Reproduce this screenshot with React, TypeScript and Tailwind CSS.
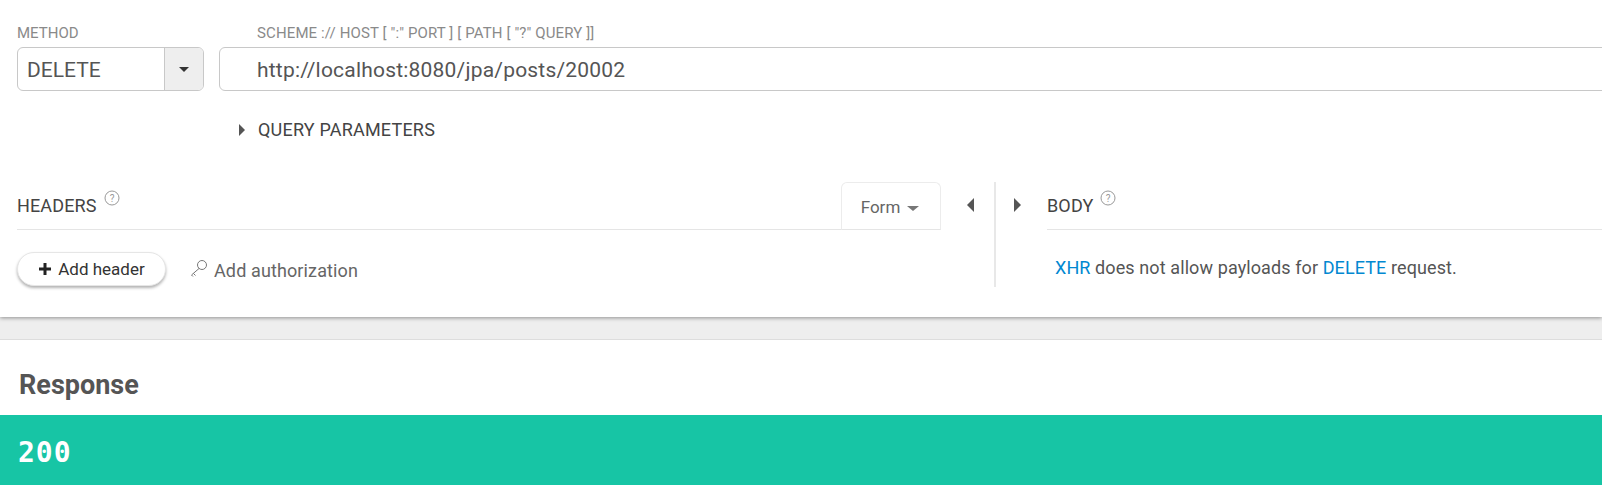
export default function App() {
  const roboto = "font-['Roboto',sans-serif]";
  return (
    <div className={`${roboto} relative h-[498px] w-[1602px] overflow-hidden bg-white text-[#4a4a4a]`}>
      <div className="relative z-10 h-[317px] bg-white shadow-[0_1px_4px_rgba(0,0,0,0.4)]">
        <div className="flex h-[130px] gap-[15px] pl-[17px] pt-[25px]">
          <div className="w-[187px] shrink-0">
            <div className="h-[22px] text-[15px] leading-[17px] text-[#8a8a8a]">METHOD</div>
            <div className="flex h-[44px] overflow-hidden rounded-[6px] border border-[#c8c8c8]">
              <div className="flex-1 pl-[9px] text-[21px] leading-[44px] text-[#555]">DELETE</div>
              <div className="flex w-[39px] items-center justify-center border-l border-[#c8c8c8] bg-[#eeeeee]">
                <div className="h-0 w-0 border-x-[5px] border-t-[5px] border-x-transparent border-t-[#333]" />
              </div>
            </div>
          </div>
          <div className="flex-1">
            <div className="h-[22px] pl-[38px] text-[15px] leading-[17px] tracking-[0.12px] text-[#8a8a8a]">SCHEME :// HOST [ ":" PORT ] [ PATH [ "?" QUERY ]]</div>
            <div className="-mr-[20px] h-[44px] rounded-[6px] border border-[#c8c8c8] pl-[37px] text-[21px] leading-[44px] tracking-[0.2px] text-[#555]">http://localhost:8080/jpa/posts/20002</div>
            <div className="flex items-center pl-[20px] pt-[27px]">
              <div className="h-0 w-0 border-y-[6px] border-l-[6px] border-y-transparent border-l-[#555]" />
              <span className="ml-[13px] text-[18px] leading-[24px] tracking-[0.2px] text-[#444]">QUERY PARAMETERS</span>
            </div>
          </div>
        </div>
        <div className="mt-[52px] flex">
          <div className="w-[994px] shrink-0">
            <div className="flex h-[48px] items-stretch pl-[17px]">
              <div className="flex flex-1 items-center border-b border-[#e5e5e5]">
                <span className="text-[18px] tracking-[0.15px] text-[#444]">HEADERS</span>
                <HelpIcon />
              </div>
              <div className="w-[100px] rounded-t-[6px] border border-[#ececec] border-b-[#e5e5e5] pr-[2px] pt-[1px] text-center text-[17px] leading-[46px] text-[#666]">
                Form
                <span className="ml-[7px] inline-block h-0 w-0 -translate-y-[2px] border-x-[6px] border-t-[5px] border-x-transparent border-t-[#777]" />
              </div>
              <div className="flex w-[53px] items-center justify-center">
                <div className="mb-[2px] ml-[6px] h-0 w-0 border-y-[7px] border-r-[7px] border-y-transparent border-r-[#555]" />
              </div>
            </div>
            <div className="flex items-center gap-[24px] pl-[17px] pt-[22px]">
              <button className="flex h-[34px] w-[149px] items-center justify-center rounded-full border border-[#e6e6e6] bg-white pt-[2px] text-[17px] text-[#333] shadow-[0_2px_3px_rgba(0,0,0,0.3)]">
                <svg width="14" height="14" viewBox="0 0 14 14" className="mb-[2px] mr-[6px]">
                  <path d="M5.500 1h3v4.500h4.500v3H8.500v4.500h-3V8.500H1v-3h4.500z" fill="#222" />
                </svg>
                Add header
              </button>
              <div className="flex items-center gap-[6px] pt-[2px] text-[18px] tracking-[0.12px] text-[#666]">
                <svg width="18" height="20" viewBox="0 0 18 20" fill="none" stroke="#777" strokeWidth="1" className="mb-[2px]">
                  <circle cx="12" cy="6" r="4.500" />
                  <path d="M9 9.500 1.500 16M3.500 14.500l2 2M1.500 16l1.500 1.500" />
                </svg>
                Add authorization
              </div>
            </div>
          </div>
          <div className="h-[105px] w-[2px] shrink-0 bg-[#e8e8e8]" />
          <div className="flex-1">
            <div className="flex h-[48px]">
              <div className="flex w-[51px] items-center justify-center">
                <div className="mb-[2px] ml-[-8px] h-0 w-0 border-y-[7px] border-l-[7px] border-y-transparent border-l-[#555]" />
              </div>
              <div className="flex flex-1 items-center border-b border-[#e5e5e5]">
                <span className="text-[18px] tracking-[0.15px] text-[#444]">BODY</span>
                <HelpIcon />
              </div>
            </div>
            <div className="pl-[59px] pt-[24px] text-[18px] leading-[28px] tracking-[0.1px] text-[#555]">
              <span className="text-[#0288d1]">XHR</span> does not allow payloads for <span className="text-[#0288d1]">DELETE</span> request.
            </div>
          </div>
        </div>
      </div>
      <div className="h-[23px] border-b border-[#dddddd] bg-[#eeeeee]" />
      <div className="pl-[19px] pt-[28px] text-[27px] font-bold leading-[34px] text-[#555]">Response</div>
      <div className="mt-[13px] flex h-[70px] items-center bg-[#17c5a5] pl-[18px] pt-[5px] font-['DejaVu_Sans_Mono',monospace] text-[28px] font-bold tracking-[1px] text-white">200</div>
    </div>
  );
}

function HelpIcon() {
  return (
    <svg width="16" height="16" viewBox="0 0 16 16" className="mb-[16px] ml-[7px]">
      <circle cx="8" cy="8" r="7" fill="none" stroke="#999" strokeWidth="1" />
      <text x="8" y="11.500" textAnchor="middle" fontSize="10" fill="#999" fontFamily="Roboto, sans-serif">?</text>
    </svg>
  );
}
